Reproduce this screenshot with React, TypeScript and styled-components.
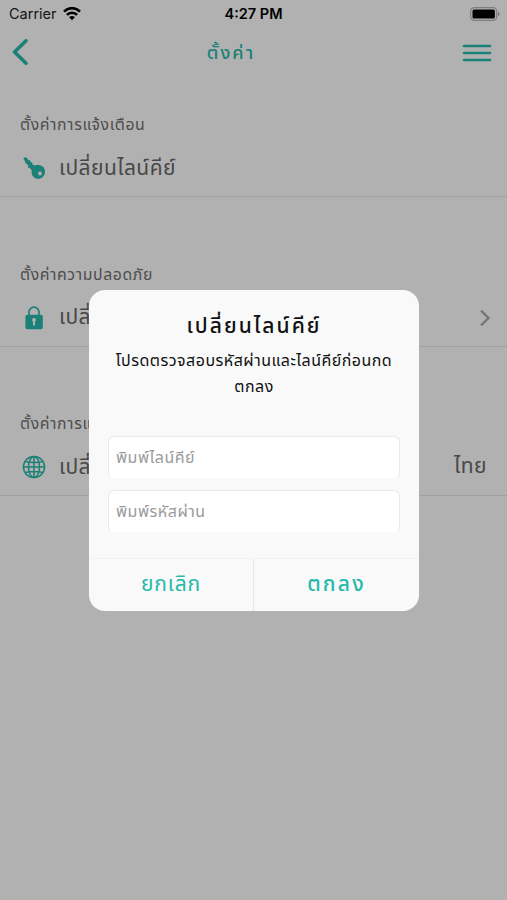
import React from "react";
import styled, { createGlobalStyle } from "styled-components";

const TEAL = "#28b9ac";
const THAI = `"Noto Sans Thai", "Prompt", "Noto Sans", sans-serif`;

const GlobalStyle = createGlobalStyle`
  * { box-sizing: border-box; }
  body { margin: 0; background: #fff; font-family: ${THAI}; }
`;

const Screen = styled.div`
  position: relative;
  width: 507px;
  height: 900px;
  overflow: hidden;
  background: #fefefe;
`;

const StatusBar = styled.div`
  display: grid;
  grid-template-columns: 1fr auto 1fr;
  align-items: center;
  height: 27px;
  padding: 0 7px 0 9px;
  font: 400 14.5px/27px Inter, sans-serif;
  color: #222;
`;

const Carrier = styled.div`
  display: flex;
  align-items: center;
  gap: 6px;
`;

const Clock = styled.div`
  margin-right: 2px;
  font-weight: 600;
  color: #000;
`;

const Battery = styled.svg`
  justify-self: end;
`;

const NavBar = styled.div`
  display: flex;
  align-items: center;
  justify-content: space-between;
  height: 51px;
  padding: 0 15px 0 12px;
`;

const NavTitle = styled.h1`
  margin: 0;
  padding: 3px 42px 0 0;
  font-size: 18px;
  font-weight: 500;
  line-height: 48px;
  letter-spacing: 2.1px;
  color: ${TEAL};
`;

const Section = styled.section`
  height: 149.5px;
`;

const SectionLabel = styled.div`
  padding: 33px 20px 0;
  font-size: 15.8px;
  line-height: 29px;
  letter-spacing: 0.6px;
  color: #707070;
`;

const Row = styled.div`
  display: flex;
  align-items: center;
  height: 57px;
  padding: 0 20px 0 22px;
  border-bottom: 1px solid #e6e6e6;
  color: #686868;
  font-size: 21px;
  line-height: 56px;
`;

const RowText = styled.span`
  flex: 1;
  padding-top: 1px;
  margin-left: 13px;
  letter-spacing: 0.45px;
`;

const RowValue = styled.span`
  letter-spacing: 0.45px;
`;

const Chevron = styled.svg`
  margin-right: -4px;
`;

const Overlay = styled.div`
  position: absolute;
  inset: 0;
  padding: 290px 88px 0 89px;
  background: rgba(0, 0, 0, 0.3);
`;

const Dialog = styled.div`
  display: flex;
  flex-direction: column;
  height: 321px;
  border-radius: 16px;
  background: #f9f9f9;
  overflow: hidden;
  text-align: center;
  color: #111;
`;

const DialogTitle = styled.h2`
  margin: 21px 0 0;
  font-size: 21px;
  font-weight: 500;
  line-height: 32px;
  letter-spacing: 2.05px;
`;

const Message = styled.p`
  margin: 5px 0 0;
  font-size: 16px;
  line-height: 26px;
  letter-spacing: 0.48px;
  white-space: nowrap;
`;

const Fields = styled.div`
  display: flex;
  flex-direction: column;
  gap: 11px;
  margin: 36px 19px 0;
`;

const Field = styled.input`
  width: 100%;
  height: 43px;
  padding: 1px 7px 0;
  border: 1px solid #e9e9e9;
  border-bottom-color: #f9f9f9;
  border-radius: 6px;
  background: #fff;
  font: 400 16px ${THAI};
  letter-spacing: 0.5px;
  outline: none;
  &::placeholder { color: #9b9b9b; opacity: 1; }
`;

const Actions = styled.div`
  display: grid;
  grid-template-columns: 164px 1fr;
  height: 53px;
  margin-top: auto;
  border-top: 1px solid #f2f2f2;
`;

const Action = styled.button<{ $strong?: boolean }>`
  padding: 0 0 2px;
  border: 0;
  border-left: ${(p) => (p.$strong ? "1px solid #e7e7e7" : "0")};
  background: none;
  color: ${TEAL};
  font: ${(p) => (p.$strong ? 500 : 400)} 21px ${THAI};
  letter-spacing: ${(p) => (p.$strong ? 2.2 : 0.9)}px;
`;

const WifiIcon = () => (
  <svg width="18" height="14" viewBox="0 0 18 14" fill="none" stroke="#000" strokeWidth="2.6">
    <path d="M1 4.6C5.4 0 12.6 0 17 4.6" />
    <path d="M3.9 7.9C6.7 5 11.3 5 14.1 7.9" />
    <path d="M6.1 10.2C7.7 8.6 10.3 8.6 11.9 10.2L9 13.2Z" fill="#000" stroke="none" />
  </svg>
);

const KeyIcon = () => (
  <svg width="24" height="24" viewBox="0 0 24 24">
    <path
      fill={TEAL}
      fillRule="evenodd"
      d="M1.2 2.2Q3.2.2 5 2L6.4 3.9 8 4.2 8.5 6 10.2 6.6 10.5 8.4 12.8 9.4Q17 7.8 20.7 10.6C24.4 13.7 23.4 20.4 19 22.3C13.4 24.6 8.3 19.3 9.8 14.5L7.5 11.8 5.9 12 6.3 9.8 4.3 7.2 3.1 7.5 3.2 5.7ZM18 15.6A1.9 1.9 0 1 0 18 19.4A1.9 1.9 0 1 0 18 15.6Z"
    />
  </svg>
);

const LockIcon = () => (
  <svg width="24" height="24" viewBox="0 0 24 24">
    <path d="M7 10V6.2a5 5 0 0 1 10 0V10" fill="none" stroke={TEAL} strokeWidth="1.7" />
    <rect x="3.4" y="8.8" width="17.4" height="14.4" rx="2" fill={TEAL} />
    <path d="M12 12a1.9 1.9 0 0 0-1 3.5v4h2v-4a1.9 1.9 0 0 0-1-3.5Z" fill="#fff" />
  </svg>
);

const GlobeIcon = () => (
  <svg width="24" height="24" viewBox="0 0 24 24" fill="none" stroke={TEAL} strokeWidth="1.5">
    <circle cx="12" cy="12" r="10.6" />
    <ellipse cx="12" cy="12" rx="5.5" ry="10.6" />
    <path d="M12 1.4v21.2M1.4 12h21.2M3.1 6.4q8.9 2.2 17.8 0M3.1 17.6q8.9-2.2 17.8 0" />
  </svg>
);

export default function App() {
  return (
    <>
      <GlobalStyle />
      <Screen>
        <StatusBar>
          <Carrier>Carrier<WifiIcon /></Carrier>
          <Clock>4:27 PM</Clock>
          <Battery width="30" height="14" viewBox="0 0 30 14">
            <rect x=".7" y=".7" width="26" height="12.6" rx="3.6" fill="none" stroke="#b5b5b5" strokeWidth="1.2" />
            <rect x="2.5" y="2.5" width="22.4" height="9" rx="1.5" fill="#000" />
            <path d="M28 4.8v4.4q1.6-.8 1.6-2.2t-1.6-2.2Z" fill="#aaa" />
          </Battery>
        </StatusBar>
        <NavBar>
          <svg width="30" height="28" viewBox="0 0 30 28" fill="none" stroke={TEAL} strokeWidth="3.6" strokeLinecap="round" strokeLinejoin="round">
            <path d="M14 1.8L2.6 13 14 24.2" />
          </svg>
          <NavTitle>ตั้งค่า</NavTitle>
          <svg width="30" height="20" viewBox="0 0 30 20" stroke={TEAL} strokeWidth="2.6" strokeLinecap="round">
            <path d="M2 3h26M2 10h26M2 17h26" />
          </svg>
        </NavBar>

        <Section>
          <SectionLabel>ตั้งค่าการแจ้งเตือน</SectionLabel>
          <Row>
            <KeyIcon />
            <RowText>เปลี่ยนไลน์คีย์</RowText>
          </Row>
        </Section>
        <Section>
          <SectionLabel>ตั้งค่าความปลอดภัย</SectionLabel>
          <Row>
            <LockIcon />
            <RowText>เปลี่ยนรหัสผ่าน</RowText>
            <Chevron width="12" height="18" viewBox="0 0 12 18" fill="none" stroke="#aaa" strokeWidth="2.4">
              <path d="M2 1.5L9.5 9 2 16.5" />
            </Chevron>
          </Row>
        </Section>
        <Section>
          <SectionLabel>ตั้งค่าการแสดงผล</SectionLabel>
          <Row>
            <GlobeIcon />
            <RowText>เปลี่ยนภาษา</RowText>
            <RowValue>ไทย</RowValue>
          </Row>
        </Section>

        <Overlay>
          <Dialog role="dialog">
            <DialogTitle>เปลี่ยนไลน์คีย์</DialogTitle>
            <Message>
              โปรดตรวจสอบรหัสผ่านและไลน์คีย์ก่อนกด
              <br />
              ตกลง
            </Message>
            <Fields>
              <Field placeholder="พิมพ์ไลน์คีย์" />
              <Field placeholder="พิมพ์รหัสผ่าน" />
            </Fields>
            <Actions>
              <Action>ยกเลิก</Action>
              <Action $strong>ตกลง</Action>
            </Actions>
          </Dialog>
        </Overlay>
      </Screen>
    </>
  );
}
